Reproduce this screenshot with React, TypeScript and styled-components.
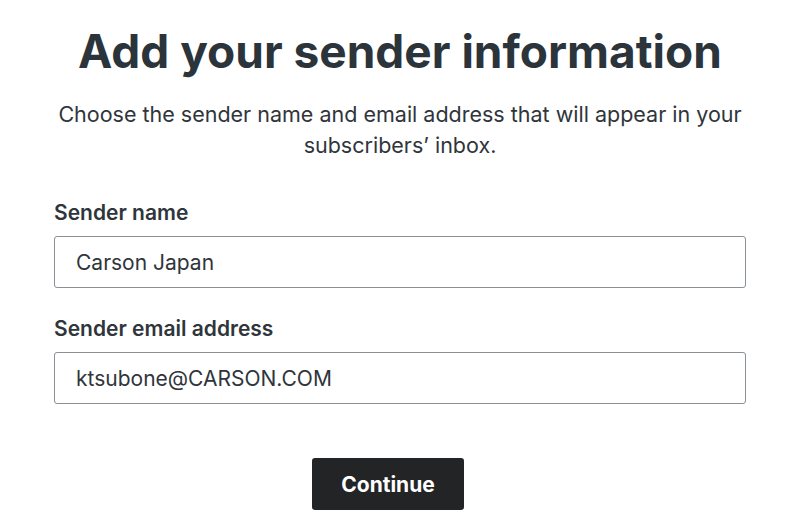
import React from "react";
import styled, { createGlobalStyle } from "styled-components";

const Global = createGlobalStyle`
  html, body { margin: 0; padding: 0; background: #ffffff; }
  body { font-family: Inter, "Open Sans", sans-serif; color: #2f353b; }
  * { box-sizing: border-box; }
`;

const Page = styled.div`
  width: 692px;
  margin: 0 auto;
  padding-top: 23px;
  display: flex;
  flex-direction: column;
`;

const Title = styled.h1`
  margin: 0;
  text-align: center;
  font-size: 46px;
  font-weight: 700;
  line-height: 56px;
  color: #2c343b;
`;

const Subtitle = styled.p`
  margin: 20px 0 0;
  text-align: center;
  font-size: 21.5px;
  line-height: 31px;
  color: #2f353b;
`;

const Form = styled.form`
  margin-top: 40px;
  display: flex;
  flex-direction: column;
  gap: 29px;
`;

const Field = styled.div`
  display: flex;
  flex-direction: column;
  gap: 11px;
`;

const Label = styled.label`
  font-size: 21px;
  font-weight: 600;
  line-height: 24px;
  color: #2f353b;
`;

const Input = styled.input`
  height: 52px;
  width: 100%;
  border: 1px solid #8a9096;
  border-radius: 3px;
  padding: 0 21px;
  font-family: inherit;
  font-size: 21px;
  color: #2f353b;
  background: #fff;
  outline: none;
`;

const Actions = styled.div`
  display: flex;
  justify-content: center;
  margin-top: 54px;
  padding-right: 24px;
`;

const Button = styled.button`
  width: 152px;
  height: 52px;
  border: none;
  border-radius: 3px;
  background: #222426;
  color: #ffffff;
  font-family: inherit;
  font-size: 21px;
  font-weight: 700;
  cursor: pointer;
`;

export default function App() {
  return (
    <>
      <Global />
      <Page>
        <Title>Add your sender information</Title>
        <Subtitle>
          Choose the sender name and email address that will appear in your
          subscribers’ inbox.
        </Subtitle>
        <Form onSubmit={(e) => e.preventDefault()}>
          <Field>
            <Label htmlFor="sender-name">Sender name</Label>
            <Input id="sender-name" defaultValue="Carson Japan" />
          </Field>
          <Field>
            <Label htmlFor="sender-email">Sender email address</Label>
            <Input id="sender-email" defaultValue="ktsubone@CARSON.COM" />
          </Field>
        </Form>
        <Actions>
          <Button type="button">Continue</Button>
        </Actions>
      </Page>
    </>
  );
}
